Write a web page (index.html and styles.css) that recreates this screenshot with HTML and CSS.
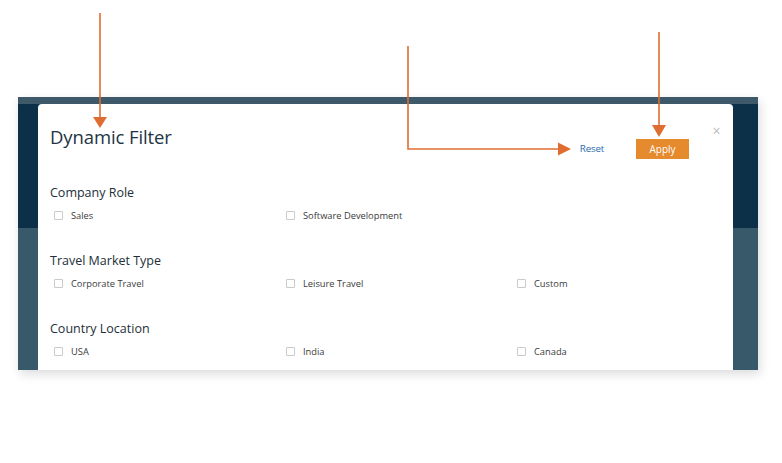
FILE: index.html
```html
<!DOCTYPE html>
<html lang="en">
<head>
<meta charset="utf-8">
<title>Dynamic Filter</title>
<link rel="stylesheet" href="styles.css">
</head>
<body>
<div class="stage">
  <div class="backdrop">
    <div class="modal">
      <div class="modal-header">
        <h1 class="title">Dynamic Filter</h1>
        <div class="actions">
          <a class="reset" href="#">Reset</a>
          <button class="apply" type="button">Apply</button>
        </div>
        <span class="close">&times;</span>
      </div>

      <section class="group first">
        <h2 class="group-title">Company Role</h2>
        <div class="options">
          <label class="option"><span class="box"></span>Sales</label>
          <label class="option"><span class="box"></span>Software Development</label>
        </div>
      </section>

      <section class="group">
        <h2 class="group-title">Travel Market Type</h2>
        <div class="options">
          <label class="option"><span class="box"></span>Corporate Travel</label>
          <label class="option"><span class="box"></span>Leisure Travel</label>
          <label class="option"><span class="box"></span>Custom</label>
        </div>
      </section>

      <section class="group">
        <h2 class="group-title">Country Location</h2>
        <div class="options">
          <label class="option"><span class="box"></span>USA</label>
          <label class="option"><span class="box"></span>India</label>
          <label class="option"><span class="box"></span>Canada</label>
        </div>
      </section>
    </div>
  </div>

  <svg class="annotations" width="782" height="463" viewBox="0 0 782 463" aria-hidden="true">
    <g stroke="#df6d32" stroke-width="1.6" fill="none">
      <line x1="100" y1="13" x2="100" y2="118"/>
      <polyline points="408,46 408,149 560,149"/>
      <line x1="659" y1="32" x2="659" y2="126"/>
    </g>
    <g fill="#df6d32">
      <polygon points="93,117 107,117 100,128"/>
      <polygon points="558,142.5 558,155.5 571,149"/>
      <polygon points="652,125 666,125 659,137"/>
    </g>
  </svg>
</div>
</body>
</html>
```

FILE: styles.css
```css
html, body {
  margin: 0;
  padding: 0;
  background: #ffffff;
}

body {
  font-family: "Open Sans", "Noto Sans", sans-serif;
  color: #333;
}

.stage {
  position: relative;
  width: 782px;
  height: 463px;
  overflow: hidden;
  padding-top: 97px;
  box-sizing: border-box;
}

.backdrop {
  margin-left: 18px;
  width: 740px;
  height: 273px;
  box-sizing: border-box;
  padding: 7px 25px 0 20px;
  display: flex;
  flex-direction: column;
  background: linear-gradient(to bottom,
    #3e5a6a 0, #3e5a6a 7px,
    #0b3048 7px, #0b3048 131px,
    #37596a 131px, #37596a 100%);
  box-shadow: 2px 4px 10px rgba(0, 0, 0, 0.14);
}

.modal {
  flex: 1;
  background: #ffffff;
  border-radius: 4px 4px 0 0;
  padding: 20px 12px 0 12px;
  box-sizing: border-box;
  overflow: hidden;
}

.modal-header {
  display: flex;
  align-items: flex-start;
  height: 26px;
}

.title {
  margin: 0;
  font-size: 18.5px;
  line-height: 26px;
  font-weight: 400;
  color: #1d3444;
  letter-spacing: -0.1px;
}

.actions {
  margin-left: auto;
  margin-top: 15px;
  display: flex;
  align-items: center;
  gap: 32px;
}

.reset {
  font-size: 9.8px;
  color: #2b6cb0;
  text-decoration: none;
  line-height: 20px;
  letter-spacing: -0.2px;
}

.apply {
  width: 53px;
  height: 20px;
  border: 0;
  border-radius: 0;
  background: #e68a2e;
  color: #ffffff;
  font-family: "Open Sans", "Noto Sans", sans-serif;
  font-size: 10px;
  padding: 0;
  line-height: 20px;
}

.close {
  margin-left: 23px;
  margin-top: 1px;
  width: 9px;
  font-size: 14px;
  line-height: 12px;
  color: #bcbcbc;
  text-align: center;
}

.group {
  margin-top: 30px;
}

.group.first {
  margin-top: 34px;
}

.group-title {
  margin: 0;
  font-size: 12.5px;
  line-height: 18px;
  font-weight: 400;
  color: #222f38;
}

.options {
  margin-top: 6px;
  padding-left: 4px;
  display: grid;
  grid-template-columns: 232px 231px 1fr;
}

.option {
  display: flex;
  align-items: center;
  height: 14px;
  font-size: 9.3px;
  color: #3a3a3a;
}

.box {
  width: 7px;
  height: 7px;
  border: 1px solid #c9c9c9;
  border-radius: 1px;
  margin-right: 8px;
  flex: none;
}

.annotations {
  position: absolute;
  left: 0;
  top: 0;
  pointer-events: none;
}
```
